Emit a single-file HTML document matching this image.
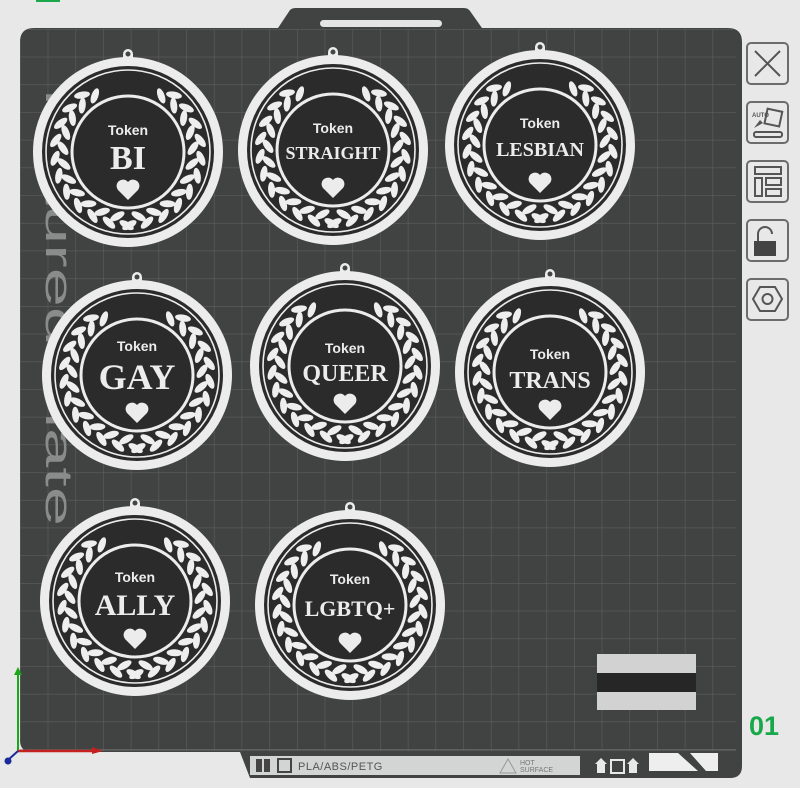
<!DOCTYPE html>
<html><head><meta charset="utf-8"><style>
html,body{margin:0;padding:0;background:#e8e8e8;width:800px;height:788px;overflow:hidden}
svg{position:absolute;left:0;top:0}
</style></head><body>
<svg width="800" height="788" viewBox="0 0 800 788" xmlns="http://www.w3.org/2000/svg">
<defs>
<pattern id="g" x="20" y="29" width="27.7" height="27.7" patternUnits="userSpaceOnUse">
<path d="M0 0H27.7M0 0V27.7" stroke="#5d5e5e" stroke-width="1.2" fill="none"/>
</pattern>
<clipPath id="pc"><rect x="20" y="28" width="722" height="724" rx="14"/></clipPath>
<g id="pair"><ellipse cx="-5" cy="-65" rx="8" ry="3.5" transform="rotate(35 -5 -65)" fill="#eee"/><ellipse cx="5" cy="-73" rx="8" ry="3.5" transform="rotate(-25 5 -73)" fill="#eee"/></g>
<g id="m">
<rect x="-5" y="-103" width="10" height="14" rx="5" fill="#ececec"/>
<circle cx="0" cy="-98" r="2.5" fill="#444"/>
<circle r="95" fill="#ececec"/>
<circle r="86" fill="#2b2b2b"/>
<circle r="82" fill="none" stroke="#ececec" stroke-width="1.6"/>
<g>
<use href="#pair" transform="rotate(35)"/><use href="#pair" transform="rotate(49)"/><use href="#pair" transform="rotate(63)"/><use href="#pair" transform="rotate(77)"/><use href="#pair" transform="rotate(91)"/><use href="#pair" transform="rotate(105)"/><use href="#pair" transform="rotate(119)"/><use href="#pair" transform="rotate(133)"/><use href="#pair" transform="rotate(147)"/><use href="#pair" transform="rotate(161)"/><use href="#pair" transform="rotate(175)"/>
<g transform="scale(-1 1)"><use href="#pair" transform="rotate(35)"/><use href="#pair" transform="rotate(49)"/><use href="#pair" transform="rotate(63)"/><use href="#pair" transform="rotate(77)"/><use href="#pair" transform="rotate(91)"/><use href="#pair" transform="rotate(105)"/><use href="#pair" transform="rotate(119)"/><use href="#pair" transform="rotate(133)"/><use href="#pair" transform="rotate(147)"/><use href="#pair" transform="rotate(161)"/><use href="#pair" transform="rotate(175)"/></g>
</g>
<circle r="56" fill="none" stroke="#ececec" stroke-width="3"/>
<path d="M0 48 L-10 38 A5.5 5.5 0 0 1 0 30 A5.5 5.5 0 0 1 10 38 Z" fill="#ececec"/>
</g>
</defs>
<path d="M290 10 Q292 8 296 8 H464 Q468 8 470 11 L482 28 H728 Q742 28 742 42 V766 Q742 778 730 778 H250 L240 752 H32 Q20 752 20 740 V42 Q20 28 34 28 H278 Z" fill="#414242"/>
<rect x="320" y="20" width="122" height="7" rx="3.5" fill="#e4e4e4"/>
<rect x="20" y="29" width="716" height="722" fill="url(#g)" clip-path="url(#pc)"/>
<line x1="20" y1="750" x2="736" y2="750" stroke="#6a6b6b" stroke-width="1"/>
<text transform="translate(46 76) rotate(90)" font-family="Liberation Sans, sans-serif" font-size="38" fill="#8a8b8b" textLength="450" lengthAdjust="spacingAndGlyphs">Textured Plate</text>
<g font-family="Liberation Serif, serif" font-weight="bold" fill="#ececec" text-anchor="middle">
<g transform="translate(128 152)"><use href="#m"/><text y="-17" font-size="14" font-family="Liberation Sans, sans-serif">Token</text><text y="17" font-size="34">BI</text></g>
<g transform="translate(333 150)"><use href="#m"/><text y="-17" font-size="14" font-family="Liberation Sans, sans-serif">Token</text><text y="9" font-size="18">STRAIGHT</text></g>
<g transform="translate(540 145)"><use href="#m"/><text y="-17" font-size="14" font-family="Liberation Sans, sans-serif">Token</text><text y="11" font-size="20">LESBIAN</text></g>
<g transform="translate(137 375)"><use href="#m"/><text y="-24" font-size="14" font-family="Liberation Sans, sans-serif">Token</text><text y="14" font-size="36">GAY</text></g>
<g transform="translate(345 366)"><use href="#m"/><text y="-13" font-size="14" font-family="Liberation Sans, sans-serif">Token</text><text y="15" font-size="24">QUEER</text></g>
<g transform="translate(550 372)"><use href="#m"/><text y="-13" font-size="14" font-family="Liberation Sans, sans-serif">Token</text><text y="16" font-size="24">TRANS</text></g>
<g transform="translate(135 601)"><use href="#m"/><text y="-19" font-size="14" font-family="Liberation Sans, sans-serif">Token</text><text y="14" font-size="30">ALLY</text></g>
<g transform="translate(350 605)"><use href="#m"/><text y="-21" font-size="14" font-family="Liberation Sans, sans-serif">Token</text><text y="11" font-size="22">LGBTQ+</text></g>
</g>
<rect x="597" y="654" width="99" height="56" fill="#d2d2d2"/>
<rect x="597" y="673" width="99" height="19" fill="#262626"/>
<rect x="250" y="756" width="330" height="19" fill="#d3d4d4"/>
<rect x="256" y="759" width="6" height="13" fill="#444"/><rect x="264" y="759" width="6" height="13" fill="#444"/>
<rect x="278" y="759" width="13" height="13" fill="none" stroke="#444" stroke-width="2"/>
<text x="298" y="770" font-family="Liberation Sans, sans-serif" font-size="11" fill="#555" letter-spacing="0.5">PLA/ABS/PETG</text>
<path d="M500 773 L508 759 L516 773 Z" fill="none" stroke="#999" stroke-width="1"/>
<text x="520" y="765" font-family="Liberation Sans, sans-serif" font-size="7" fill="#777">HOT</text>
<text x="520" y="772" font-family="Liberation Sans, sans-serif" font-size="7" fill="#777">SURFACE</text>
<path d="M597 773 V764 H595 L601 758 L607 764 H605 V773 Z M629 773 V764 H627 L633 758 L639 764 H637 V773 Z" fill="#e8e8e8"/>
<rect x="611" y="760" width="13" height="13" fill="none" stroke="#e8e8e8" stroke-width="2"/>
<path d="M649 753 H678 L698 771 H649 Z" fill="#eee"/>
<path d="M690 753 H718 V771 H706 Z" fill="#eee"/>
<line x1="18" y1="670" x2="18" y2="751" stroke="#1aa81a" stroke-width="2"/>
<path d="M14 675 L18 667 L22 675 Z" fill="#1aa81a"/>
<line x1="18" y1="751" x2="98" y2="751" stroke="#c42020" stroke-width="2.5"/>
<path d="M92 747 L103 751 L92 754 Z" fill="#c42020"/>
<line x1="18" y1="751" x2="8" y2="760" stroke="#1a2a9a" stroke-width="2"/>
<circle cx="8" cy="761" r="3.5" fill="#1a2a9a"/>
<text x="749" y="735" font-family="Liberation Sans, sans-serif" font-weight="bold" font-size="27" fill="#17a84a">01</text>
<rect x="36" y="0" width="24" height="2" fill="#1aa84a"/>
<g fill="#e8e8e8" stroke="#6c6c6c" stroke-width="2">
<rect x="747" y="43" width="41" height="41" rx="4"/>
<rect x="747" y="102" width="41" height="41" rx="4"/>
<rect x="747" y="161" width="41" height="41" rx="4"/>
<rect x="747" y="220" width="41" height="41" rx="4"/>
<rect x="747" y="279" width="41" height="41" rx="4"/>
</g>
<g stroke="#555" fill="none" stroke-width="2">
<path d="M755 51 L780 76 M780 51 L755 76"/>
<rect x="766" y="110" width="15" height="15" transform="rotate(12 773 117)"/>
<rect x="754" y="132" width="28" height="5" rx="2"/>
<rect x="755" y="167" width="26" height="7"/><rect x="755" y="178" width="7" height="18"/><rect x="766" y="178" width="15" height="7"/><rect x="766" y="189" width="15" height="7"/>
<path d="M758 242 V234 A7 7 0 0 1 772 234"/>
<path d="M760 287 H775 L782 299 L775 311 H760 L753 299 Z"/><circle cx="767.5" cy="299" r="5"/>
</g>
<text x="752" y="117" font-family="Liberation Sans, sans-serif" font-size="6" font-weight="bold" fill="#555">AUTO</text>
<path d="M754 128 L760 120 L763 123 Z" fill="#555"/>
<rect x="754" y="241" width="22" height="15" fill="#444"/>
</svg>
</body></html>
